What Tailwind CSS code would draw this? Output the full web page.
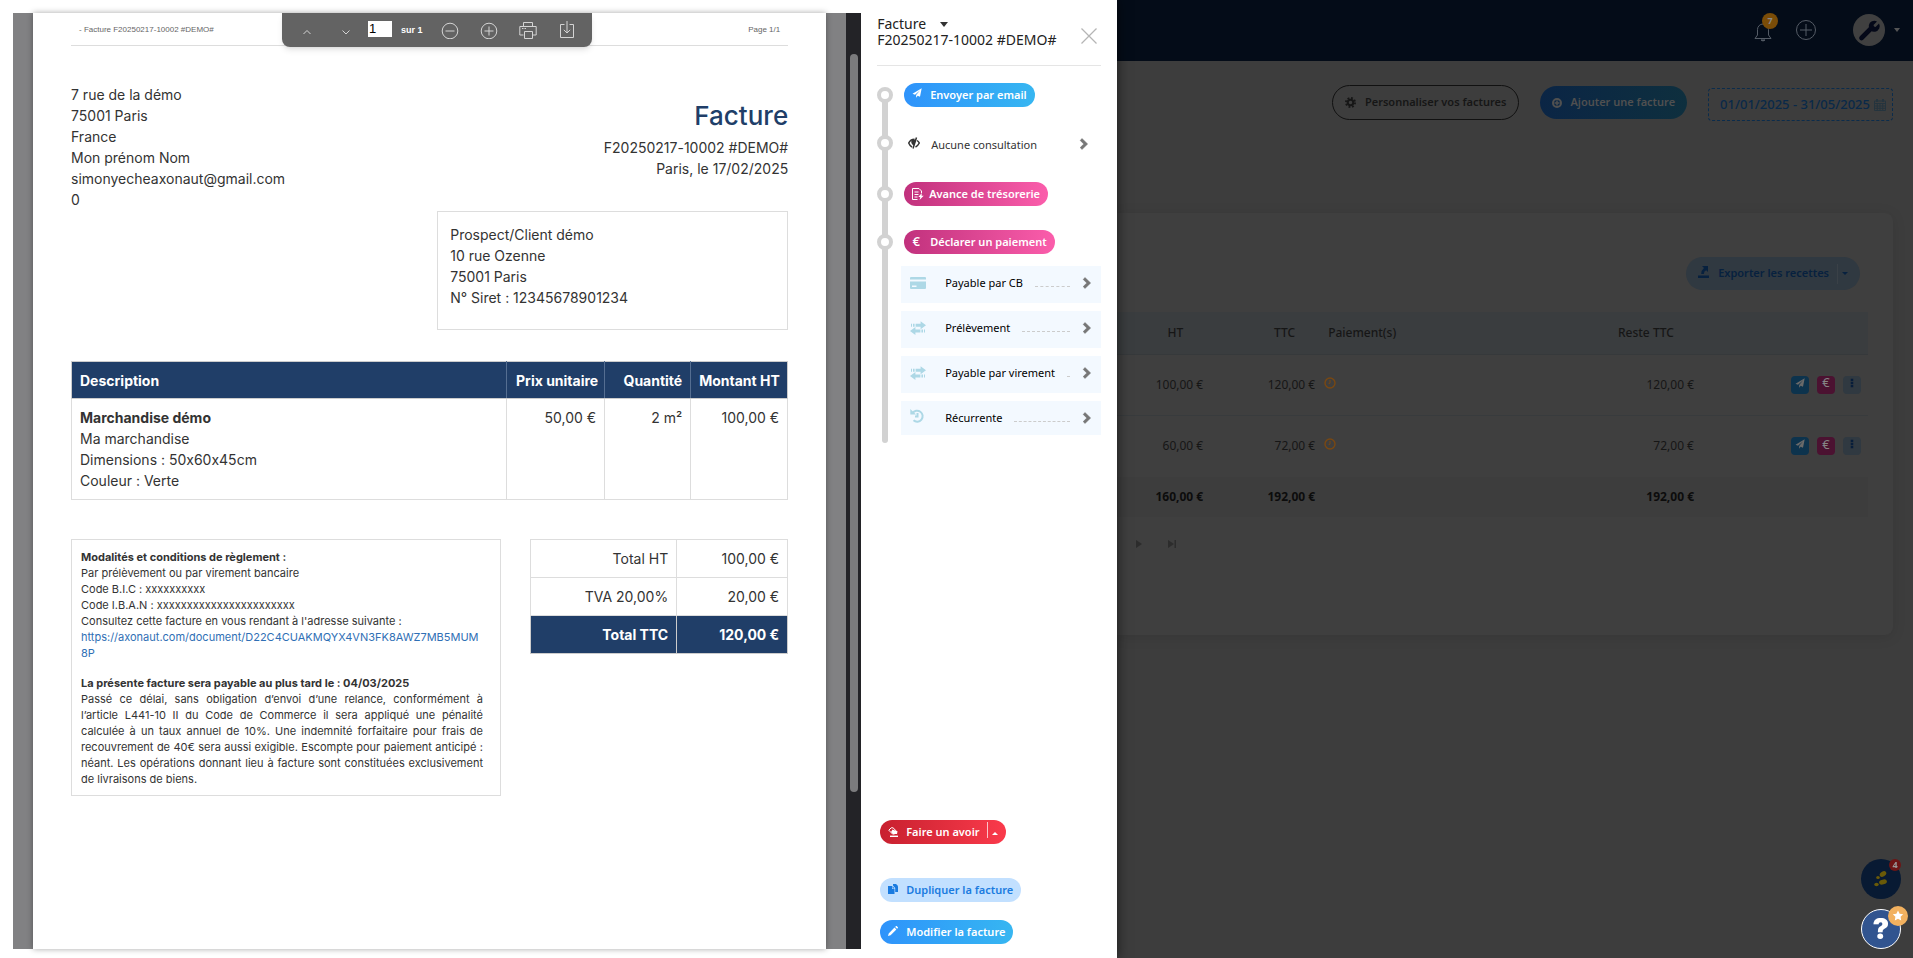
<!DOCTYPE html>
<html lang="fr">
  <head>
    <meta charset="UTF-8" />
    <meta name="viewport" content="width=device-width, initial-scale=1.0" />
    <title>Facture F20250217-10002 #DEMO#</title>
    <script src="https://cdn.jsdelivr.net/npm/@tailwindcss/browser@4"></script>
  </head>
  <body class="bg-[#3d3d3d] font-['Noto_Sans',sans-serif] text-xs">
    <!-- shared icons -->
    <svg class="hidden" aria-hidden="true">
      <symbol id="plane" viewBox="0 0 16 16">
        <path d="M15.5 0.5 0.8 9l4 1.6L13 3.6 6.6 11.3V15.5l2.4-3.1 3.8 1.6z" fill="currentColor" />
      </symbol>
      <symbol id="chevron" viewBox="0 0 10 12">
        <path d="M1.2 2.4 3 .6 8.6 6 3 11.4 1.2 9.6 4.8 6z" fill="currentColor" stroke="currentColor" stroke-width=".6" />
      </symbol>
      <symbol id="transfer" viewBox="0 0 16 14">
        <path d="M1 2.8h1v3H1zM3 2.8h1.600v3H3zM5.600 2.800h5V.200L16 4.300l-5.400 4V5.800h-5zM15 8.600h-1v3h1zM13 8.600h-1.600v3H13zM10.400 8.600h-5V6L0 10.100l5.400 3.900v-2.400h5z" fill="currentColor" />
      </symbol>
      <symbol id="clock" viewBox="0 0 12 12">
        <circle cx="6" cy="6" r="5" fill="none" stroke="currentColor" stroke-width="1.4" />
        <path d="M6 3v3.300H4.500" fill="none" stroke="currentColor" />
      </symbol>
      <symbol id="dots" viewBox="0 0 4 12">
        <path d="M.5 .8h3v2.800h-3zM.5 4.600h3v2.800h-3zM.5 8.400h3v2.800h-3z" fill="currentColor" />
      </symbol>
    </svg>

    <div class="flex h-screen overflow-hidden">
      <section class="z-10 flex w-[58.4%] shrink-0 bg-white shadow-[0_0_12px_rgba(0,0,0,0.6)]">
        <!-- pdf viewer -->
        <div class="mt-[13px] mb-[9px] ml-[13px] flex flex-1 bg-[#818183] font-['Inter',sans-serif] text-[#333] [font-feature-settings:'calt'_0]">
          <article class="relative mx-5 flex-1 bg-white px-[38px] shadow-[0_0_6px_rgba(0,0,0,0.35)]">
            <div class="absolute top-0 left-[249px] flex h-[34px] items-center rounded-b-lg bg-[#636363] pr-[6px] pl-[5px] text-[#d4d4d4] shadow-md">
              <button aria-label="Page précédente" class="flex w-[39px] justify-center">
                <svg class="mt-1 h-2 w-2" viewBox="0 0 8 8" fill="none" stroke="currentColor"><path d="M.5 6 4 2.500 7.500 6" /></svg>
              </button>
              <button aria-label="Page suivante" class="flex w-[39px] justify-center">
                <svg class="mt-1 h-2 w-2" viewBox="0 0 8 8" fill="none" stroke="currentColor"><path d="M.5 2.500 4 6l3.500-3.500" /></svg>
              </button>
              <input aria-label="Page" value="1" class="mr-[9px] mb-[3px] ml-[3px] h-4 w-6 bg-white px-px font-['Liberation_Sans',sans-serif] text-[13px] text-black outline-none" />
              <span class="w-[29px] font-['Liberation_Sans',sans-serif] text-[9px] font-bold text-white">sur 1</span>
              <button aria-label="Zoom arrière" class="flex w-[39px] justify-center">
                <svg class="h-[18px] w-[18px]" viewBox="0 0 18 18" fill="none" stroke="currentColor"><circle cx="9" cy="10" r="7.800" /><path d="M4.500 10h9" /></svg>
              </button>
              <button aria-label="Zoom avant" class="flex w-[39px] justify-center">
                <svg class="h-[18px] w-[18px]" viewBox="0 0 18 18" fill="none" stroke="currentColor"><circle cx="9" cy="10" r="7.800" /><path d="M4.500 10h9M9 5.500v9" /></svg>
              </button>
              <button aria-label="Imprimer" class="flex w-[39px] justify-center">
                <svg class="h-[18px] w-[18px]" viewBox="0 0 18 18" fill="none" stroke="currentColor"><path d="M4.500 5.500v-4h9v4M4.500 14H.800V5.500h16.400V14h-3.700M5.500 10.500h8v7h-8zM3 7.500h1.500M5.500 7.500H7" /></svg>
              </button>
              <button aria-label="Télécharger" class="flex w-[39px] justify-center">
                <svg class="h-[18px] w-4" viewBox="0 0 16 18" fill="none" stroke="currentColor"><path d="M5.500 3.500h-4v13h13v-13h-4M8 0v12M4.800 8.800 8 12l3.200-3.200" /></svg>
              </button>
            </div>

            <header class="flex h-[33px] items-center justify-between border-b border-[#ddd] px-2 pt-[3px] font-['Liberation_Sans',sans-serif] text-[8px] text-[#666]">
              <span>- Facture F20250217-10002 #DEMO#</span>
              <span>Page 1/1</span>
            </header>

            <div class="mt-[38px] flex justify-between text-[14px] leading-[21px]">
              <address class="not-italic">
                7 rue de la démo<br />75001 Paris<br />France<br />Mon prénom Nom<br />simonyecheaxonaut@gmail.com<br />0
              </address>
              <div class="pt-[13px] text-right">
                <h1 class="mb-[2px] text-[26px] leading-[38px] font-medium text-[#203e68]">Facture</h1>
                <p>F20250217-10002 #DEMO#</p>
                <p>Paris, le 17/02/2025</p>
              </div>
            </div>

            <div class="mt-px ml-auto h-[119px] w-[351px] border border-[#ddd] px-3 pt-3 text-[14px] leading-[21px]">
              Prospect/Client démo<br />10 rue Ozenne<br />75001 Paris<br />N° Siret : 12345678901234
            </div>

            <table class="mt-[31px] w-full table-fixed border-collapse text-[14px] leading-[21px]">
              <thead class="bg-[#203e68] text-white">
                <tr class="h-[37px]">
                  <th class="border border-[#ccc] border-r-[#556e91] px-2 text-left font-bold">Description</th>
                  <th class="w-[98px] border border-[#ccc] border-r-[#556e91] px-[6px] text-right font-bold whitespace-nowrap">Prix unitaire</th>
                  <th class="w-[86px] border border-[#ccc] border-r-[#556e91] px-2 text-right font-bold">Quantité</th>
                  <th class="w-[97px] border border-[#ccc] px-2 text-right font-bold whitespace-nowrap">Montant HT</th>
                </tr>
              </thead>
              <tbody>
                <tr class="h-[101px] align-top">
                  <td class="border border-[#ddd] px-2 pt-2">
                    <b>Marchandise démo</b><br />Ma marchandise<br />Dimensions : 50x60x45cm<br />Couleur : Verte
                  </td>
                  <td class="border border-[#ddd] px-2 pt-2 text-right">50,00 €</td>
                  <td class="border border-[#ddd] px-2 pt-2 text-right">2 m²</td>
                  <td class="border border-[#ddd] px-2 pt-2 text-right">100,00 €</td>
                </tr>
              </tbody>
            </table>

            <div class="mt-[39px] flex items-start justify-between">
              <div class="w-[430px] border border-[#ddd] px-[9px] pt-[9px] pb-[8px] text-[11px] leading-4">
                <p class="font-bold">Modalités et conditions de règlement :</p>
                <p>Par prélèvement ou par virement bancaire</p>
                <p>Code B.I.C : xxxxxxxxxx</p>
                <p>Code I.B.A.N : xxxxxxxxxxxxxxxxxxxxxxx</p>
                <p>Consultez cette facture en vous rendant à l'adresse suivante :</p>
                <a href="#" class="block pr-3 break-all text-[#2f6fb5]">https://axonaut.com/document/D22C4CUAKMQYX4VN3FK8AWZ7MB5MUM8P</a>
                <p class="mt-[14px] font-bold">La présente facture sera payable au plus tard le : 04/03/2025</p>
                <p class="pr-2 text-justify">
                  Passé ce délai, sans obligation d’envoi d’une relance, conformément à l’article L441-10 II du Code de Commerce il sera appliqué une pénalité calculée à un taux annuel de 10%. Une indemnité forfaitaire pour frais de recouvrement de 40€ sera aussi exigible. Escompte pour paiement anticipé : néant. Les opérations donnant lieu à facture sont constituées exclusivement de livraisons de biens.
                </p>
              </div>
              <table class="w-[258px] border-collapse text-right text-[14px] leading-[21px]">
                <tr class="h-[38px]">
                  <th class="border border-[#ddd] px-2 font-normal">Total HT</th>
                  <td class="w-[111px] border border-[#ddd] px-2">100,00 €</td>
                </tr>
                <tr class="h-[38px]">
                  <th class="border border-[#ddd] px-2 font-normal">TVA 20,00%</th>
                  <td class="border border-[#ddd] px-2">20,00 €</td>
                </tr>
                <tr class="h-[38px] bg-[#203e68] font-bold text-white">
                  <th class="border border-[#ccc] px-2">Total TTC</th>
                  <td class="border border-[#ccc] px-2">120,00 €</td>
                </tr>
              </table>
            </div>
          </article>
          <!-- scrollbar -->
          <div class="flex w-[15px] justify-center bg-[#232327] pt-[41px] pb-[157px]">
            <div class="w-2 rounded-full bg-[#7b7b7d]"></div>
          </div>
        </div>

        <!-- actions panel -->
        <aside class="flex w-64 flex-col px-4 pt-4 pb-[14px] text-[11px] text-[#333]">
          <div class="flex h-[50px] justify-between border-b border-[#e5e5e5]">
            <h2 class="text-[14px] leading-4 whitespace-nowrap text-[#222]">
              <button class="flex items-center gap-[14px]">Facture <span class="border-x-4 border-t-[5px] border-x-transparent border-t-[#333]"></span></button>
              F20250217-10002 #DEMO#
            </h2>
            <button aria-label="Fermer" class="mt-3 mr-1 h-4 w-4 text-[#b5b5b5]">
              <svg viewBox="0 0 16 16" fill="none" stroke="currentColor" stroke-width="1.300"><path d="M.5.5l15 15M15.500.500l-15 15" /></svg>
            </button>
          </div>

          <ol class="relative mt-[17px] h-[361px] pl-[27px]">
            <li class="absolute top-3 left-[5px] h-[348px] w-[6px] rounded-full bg-[#d2d2d2]"></li>
            <li class="relative flex h-6 items-center before:absolute before:-left-[27px] before:h-4 before:w-4 before:rounded-full before:border-4 before:border-[#d2d2d2] before:bg-white">
              <button class="flex h-6 items-center gap-2 rounded-full bg-linear-to-r from-[#2f93fb] to-[#37b6f1] px-2 font-semibold whitespace-nowrap text-white">
                <svg class="mb-1 h-[10px] w-[10px]"><use href="#plane" /></svg>Envoyer par email
              </button>
            </li>
            <li class="relative mt-6 flex h-6 items-center before:absolute before:-left-[27px] before:h-4 before:w-4 before:rounded-full before:border-4 before:border-[#d2d2d2] before:bg-white">
              <button class="mt-1 flex w-full items-center pr-3 pl-1">
                <svg class="mr-[11px] mb-1 h-3 w-3" viewBox="0 0 12 12" fill="none" stroke="currentColor" stroke-width="1.500"><path d="M4 10C2.500 9.200 1.300 7.500.700 6 1.800 3.600 3.800 2.200 6.500 2.200M9 3.500c1 .700 1.800 1.500 2.300 2.500C10.300 8 9 9.300 7.500 10M8.500.500 5 11.500" /><path d="M3.500 3 8 2.500 6.200 8.500C3.500 8 2.800 5 3.500 3z" fill="currentColor" stroke="none" /></svg>
                Aucune consultation
                <svg class="mb-[2px] ml-auto h-3 w-[10px] text-[#777]"><use href="#chevron" /></svg>
              </button>
            </li>
            <li class="relative mt-[27px] flex h-6 items-center before:absolute before:-left-[27px] before:h-4 before:w-4 before:rounded-full before:border-4 before:border-[#d2d2d2] before:bg-white">
              <button class="flex h-6 items-center gap-[5px] rounded-full bg-linear-to-r from-[#c1317d] to-[#fb5dab] px-2 font-semibold whitespace-nowrap text-white">
                <svg class="h-3 w-3" viewBox="0 0 12 12" fill="none" stroke="currentColor"><path d="M5.500 11.500h-5V.500H7l2.500 2.500v2M2.500 4h4M2.500 6.500h4M2.500 9h3" /><path d="M9.800 5 6.300 9h2L7.500 12 11.700 7.800H9.600z" fill="currentColor" stroke="none" /></svg>Avance de trésorerie
              </button>
            </li>
            <li class="relative mt-6 flex h-6 items-center before:absolute before:-left-[27px] before:h-4 before:w-4 before:rounded-full before:border-4 before:border-[#d2d2d2] before:bg-white">
              <button class="flex h-6 items-center gap-[10px] rounded-full bg-linear-to-r from-[#c1317d] to-[#fb5dab] px-2 font-semibold whitespace-nowrap text-white">
                <span class="mb-px w-2 text-[13px]">€</span>Déclarer un paiement
              </button>
            </li>
            <li class="-ml-[3px] mt-3 flex flex-col gap-2 whitespace-nowrap text-black">
              <button class="flex h-[37px] items-center bg-[#f3f9ff] pr-[9px] pl-[9px]">
                <svg class="mr-[19px] mb-1 h-3 w-4 text-[#add8e6]" viewBox="0 0 16 12" fill="currentColor"><path d="M1 0h14a1 1 0 0 1 1 1v1.500H0V1a1 1 0 0 1 1-1zM0 4.500h16V11a1 1 0 0 1-1 1H1a1 1 0 0 1-1-1zM2 8.500v1.500h4.500V8.500z" fill-rule="evenodd" /></svg>
                <span class="mb-[3px]">Payable par CB</span>
                <span class="mt-1 mr-3 ml-3 flex-1 border-b border-dashed border-[#ccc]"></span>
                <svg class="mb-1 h-3 w-[10px] text-[#777]"><use href="#chevron" /></svg>
              </button>
              <button class="flex h-[37px] items-center bg-[#f3f9ff] pr-[9px] pl-[9px]">
                <svg class="mr-[19px] mb-1 h-[14px] w-4 text-[#add8e6]"><use href="#transfer" /></svg>
                <span class="mb-[3px]">Prélèvement</span>
                <span class="mt-1 mr-3 ml-3 flex-1 border-b border-dashed border-[#ccc]"></span>
                <svg class="mb-1 h-3 w-[10px] text-[#777]"><use href="#chevron" /></svg>
              </button>
              <button class="flex h-[37px] items-center bg-[#f3f9ff] pr-[9px] pl-[9px]">
                <svg class="mr-[19px] mb-1 h-[14px] w-4 text-[#add8e6]"><use href="#transfer" /></svg>
                <span class="mb-[3px]">Payable par virement</span>
                <span class="mt-1 mr-3 ml-3 flex-1 border-b border-dashed border-[#ccc]"></span>
                <svg class="mb-1 h-3 w-[10px] text-[#777]"><use href="#chevron" /></svg>
              </button>
              <button class="flex h-[34px] items-center bg-[#f3f9ff] pr-[9px] pl-[9px]">
                <svg class="mr-[21px] mb-1 h-[14px] w-[14px] text-[#add8e6]" viewBox="0 0 14 14" fill="none" stroke="currentColor" stroke-width="2"><path d="M2.500 4.200A5.500 5.500 0 1 1 3.500 11.300M7.500 4v3.500H5" /><path d="M.300 0v5.500H6z" fill="currentColor" stroke="none" /></svg>
                <span>Récurrente</span>
                <span class="mt-[6px] mr-3 ml-3 flex-1 border-b border-dashed border-[#ccc]"></span>
                <svg class="h-3 w-[10px] text-[#777]"><use href="#chevron" /></svg>
              </button>
            </li>
          </ol>

          <div class="mt-auto flex flex-col items-start pl-[3px] font-semibold whitespace-nowrap">
            <div class="flex h-6 items-center rounded-full bg-linear-to-r from-[#c8202f] to-[#fa3a4b] pl-2 text-white">
              <button class="flex items-center gap-2">
                <svg class="h-[10px] w-[10px]" viewBox="0 0 10 10" fill="none" stroke="currentColor"><path d="M3.200.800.800 3.200 4.500 7h2L8.800 4.500 5 .800z" /><path d="M4.500 2.500 9.500 4.500 9 7H5L3 5z" fill="currentColor" stroke="none" /><path d="M2 9.300h8" stroke-width="1.400" /></svg>Faire un avoir
              </button>
              <button aria-label="Plus d'options" class="mb-1 ml-[7px] flex h-4 w-[19px] items-center border-l border-white/70 pl-1">
                <span class="mt-[6px] border-x-[3px] border-b-[3px] border-x-transparent border-b-white"></span>
              </button>
            </div>
            <button class="mt-[34px] flex h-6 items-center gap-2 rounded-full bg-[#c2e0ff] px-2 text-[#1a7be0]">
              <svg class="mb-[2px] h-[10px] w-[10px]" viewBox="0 0 10 10" fill="currentColor"><path d="M0 2h4v3h2.500v5H0zM4.500 2 6.500 4.500h-2zM5 0h3l2 2.500V8H7.200V4L5 1.500zM8.300.200 10 2H8.300z" /></svg>Dupliquer la facture
            </button>
            <button class="mt-[18px] flex h-6 items-center gap-2 rounded-full bg-linear-to-r from-[#2f93fb] to-[#37b6f1] px-2 text-white">
              <svg class="mb-[2px] h-[10px] w-[10px]" viewBox="0 0 10 10" fill="currentColor"><path d="M0 10 .700 7.400 6.500 1.600 8.400 3.500 2.600 9.300zM7.200.900 8 .100q.400-.2.700 0L9.900 1.300q.2.400 0 .700l-.800.800z" /></svg>Modifier la facture
            </button>
          </div>
        </aside>
      </section>

      <!-- dimmed application behind the drawer -->
      <main class="flex-1 text-[#161616]">
        <nav class="flex h-[61px] items-center justify-end bg-[#040c18] pr-[13px] pb-[2px]">
          <button aria-label="Notifications" class="relative mr-[24px] text-[#555c66]">
            <svg class="mt-1 h-5 w-[18px]" viewBox="0 0 18 20" fill="none" stroke="currentColor"><path d="M1 16.500 3.500 13V7.500a5.500 5.500 0 0 1 11 0V13l2.500 3.500z" /><path d="M7 18q2 2 4 0z" fill="currentColor" /></svg>
            <span class="absolute -top-[5px] left-2 flex h-4 w-4 items-center justify-center rounded-full bg-[#7a4c07] text-[9px] font-bold text-[#8a8a8a]">7</span>
          </button>
          <button aria-label="Ajouter" class="mr-[37px] text-[#555c66]">
            <svg class="h-5 w-5" viewBox="0 0 20 20" fill="none" stroke="currentColor"><circle cx="10" cy="10" r="9.500" /><path d="M10 4v12M4 10h12" /></svg>
          </button>
          <button aria-label="Compte" class="flex items-center gap-[9px]">
            <svg class="h-8 w-8" viewBox="0 0 32 32"><circle cx="16" cy="16" r="16" fill="#404040" /><path d="M8.500 24 18 14.500" stroke="#040818" stroke-width="4.600" stroke-linecap="round" /><path d="M24 7.500 20.500 11l.500 1.500 1.500.500 3.500-3.500a5.500 5.500 0 1 1-2-2z" fill="#040818" /></svg>
            <span class="border-x-[3px] border-t-4 border-x-transparent border-t-[#555]"></span>
          </button>
        </nav>

        <div class="mr-5 flex items-center justify-end gap-[21px] pt-[23px] text-[11px]">
          <button class="flex h-[35px] items-center gap-[9px] rounded-full border border-[#111] px-3 font-semibold">
            <svg class="h-[11px] w-[11px]" viewBox="0 0 12 12" fill="none" stroke="currentColor"><circle cx="6" cy="6" r="3" stroke-width="2.200" /><circle cx="6" cy="6" r="5" stroke-width="2" stroke-dasharray="2 1.930" /></svg>Personnaliser vos factures
          </button>
          <button class="flex h-[33px] items-center gap-2 rounded-full bg-linear-to-r from-[#0b2545] to-[#0e2f3e] px-3 font-semibold text-[#505050]">
            <svg class="h-[10px] w-[10px]" viewBox="0 0 10 10" fill="none" stroke="currentColor" stroke-width="2"><circle cx="5" cy="5" r="4" /><path d="M5 2.500v5M2.500 5h5" stroke-width="1.500" /></svg>Ajouter une facture
          </button>
          <button class="mt-[4px] flex h-[33px] items-center gap-1 rounded border border-dashed border-[#0b2c4c] px-[6px] pl-[11px] text-[13px] font-medium text-[#092949]">
            01/01/2025 - 31/05/2025
            <svg class="h-3 w-3" viewBox="0 0 12 12" fill="none" stroke="#25343e"><path d="M.500 2h11v9.500H.500zM.500 4.500h11M.500 7h11M.500 9.300h11M3.300 4.500v7M6 4.500v7M8.700 4.500v7" /><path d="M3 0v3M9 0v3" stroke-width="2" /></svg>
          </button>
        </div>

        <div class="mt-[92px] mr-5 h-[422px] rounded-r-lg bg-[#3f3f3f] pr-[25px] shadow-[0_2px_14px_rgba(0,0,0,0.1)]">
          <div class="flex justify-end pt-[44px] pr-2">
            <div class="flex h-[33px] items-center rounded-full bg-[#303941] pl-3 text-[11px] font-semibold text-[#07213f]">
              <button class="flex items-center gap-[9px]">
                <svg class="mb-1 h-3 w-[11px]" viewBox="0 0 11 12" fill="currentColor"><path d="M0 9.500h11V12H0zM4 0h6v6L8.200 4.200Q6 5 5.800 8H3.200Q3 4.500 6 2z" /></svg>Exporter les recettes
              </button>
              <button aria-label="Plus d'exports" class="ml-2 flex h-5 w-[23px] items-center border-l border-[#3a4147] pl-1">
                <span class="border-x-[3px] border-t-[3px] border-x-transparent border-t-[#07213f]"></span>
              </button>
            </div>
          </div>

          <table class="mt-[22px] w-full table-fixed">
            <thead>
              <tr class="h-[42px] border-b border-[#36393b] bg-[#3a3d3f]">
                <th class="w-[94px] pr-7 text-right font-medium">HT</th>
                <th class="w-[113px] pr-[29px] text-right font-medium">TTC</th>
                <th class="pl-1 text-left font-medium">Paiement(s)</th>
                <th class="w-[110px] pr-7 text-right font-medium">Reste TTC</th>
                <th class="w-[166px]"></th>
              </tr>
            </thead>
            <tbody class="text-right">
              <tr class="h-[61px] border-b border-[#383b3d]">
                <td class="pr-2">100,00 €</td>
                <td class="pr-[9px]">120,00 €</td>
                <td><svg class="mb-1 h-3 w-3 text-[#7a4812]"><use href="#clock" /></svg></td>
                <td class="pr-2">120,00 €</td>
                <td>
                  <div class="flex justify-end gap-2 pr-[7px]">
                    <button aria-label="Envoyer" class="flex h-[18px] w-[18px] items-center justify-center rounded-sm bg-[#0d334d] text-[#6a6a6a]"><svg class="mb-1 h-[10px] w-[10px]"><use href="#plane" /></svg></button>
                    <button aria-label="Paiement" class="flex h-[18px] w-[18px] items-center justify-center rounded-sm bg-[#4b1231] pb-1 text-[13px] text-[#858585]">€</button>
                    <button aria-label="Options" class="flex h-[18px] w-[18px] items-center justify-center rounded-sm bg-[#303941] text-[#071d3a]"><svg class="mb-1 h-[10px] w-[4px]"><use href="#dots" /></svg></button>
                  </div>
                </td>
              </tr>
              <tr class="h-[62px]">
                <td class="pr-2">60,00 €</td>
                <td class="pr-[9px]">72,00 €</td>
                <td><svg class="mb-1 h-3 w-3 text-[#7a4812]"><use href="#clock" /></svg></td>
                <td class="pr-2">72,00 €</td>
                <td>
                  <div class="flex justify-end gap-2 pr-[7px]">
                    <button aria-label="Envoyer" class="flex h-[18px] w-[18px] items-center justify-center rounded-sm bg-[#0d334d] text-[#6a6a6a]"><svg class="mb-1 h-[10px] w-[10px]"><use href="#plane" /></svg></button>
                    <button aria-label="Paiement" class="flex h-[18px] w-[18px] items-center justify-center rounded-sm bg-[#4b1231] pb-1 text-[13px] text-[#858585]">€</button>
                    <button aria-label="Options" class="flex h-[18px] w-[18px] items-center justify-center rounded-sm bg-[#303941] text-[#071d3a]"><svg class="mb-1 h-[10px] w-[4px]"><use href="#dots" /></svg></button>
                  </div>
                </td>
              </tr>
            </tbody>
            <tfoot>
              <tr class="h-10 bg-[#3d3d3d] text-right font-bold text-[#0c0c0c]">
                <td class="pr-2">160,00 €</td>
                <td class="pr-[9px]">192,00 €</td>
                <td></td>
                <td class="pr-2">192,00 €</td>
                <td></td>
              </tr>
            </tfoot>
          </table>

          <div class="mt-[23px] flex items-center gap-[26px] pl-[19px] text-[#2c2c2c]">
            <button aria-label="Suivant" class="h-2 w-[6px]"><svg class="h-2 w-[6px]" viewBox="0 0 6 8" fill="currentColor"><path d="M0 0 6 4 0 8z" /></svg></button>
            <button aria-label="Dernier" class="h-2 w-2"><svg class="h-2 w-2" viewBox="0 0 8 8" fill="currentColor"><path d="M0 0 6 4 0 8zM6.500 0H8v8H6.500z" /></svg></button>
          </div>
        </div>
      </main>
    </div>

    <!-- floating helpers -->
    <div class="fixed right-3 bottom-[9px] z-20 flex flex-col gap-[10px]">
      <button aria-label="Premiers pas" class="relative flex h-10 w-10 items-center justify-center rounded-full bg-[#081a33]">
        <svg class="h-5 w-4" viewBox="0 0 16 20" fill="#6a5a08"><ellipse cx="10" cy="5" rx="3.600" ry="2.400" transform="rotate(-35 10 5)" /><ellipse cx="5" cy="8.500" rx="1.800" ry="1.500" /><ellipse cx="10" cy="13" rx="4" ry="2.400" transform="rotate(-15 10 13)" /><ellipse cx="3.500" cy="15.500" rx="2.200" ry="1.700" /></svg>
        <span class="absolute top-0 right-0 flex h-3 w-3 items-center justify-center rounded-full bg-[#6d1515] text-[9px] font-bold text-[#999]">4</span>
      </button>
      <button aria-label="Aide" class="relative flex h-10 w-10 items-center justify-center rounded-full border border-white bg-[#31548f] font-['Inter',sans-serif] text-[28px] leading-none font-black text-white">
        ?
        <svg class="absolute -top-[4px] -right-[8px] h-5 w-5" viewBox="0 0 20 20"><circle cx="10" cy="10" r="10" fill="#f2b15f" /><path d="M10 4.500 11.600 7.800 15.200 8.300 12.600 10.800 13.200 14.500 10 12.700 6.800 14.500 7.400 10.800 4.800 8.300 8.400 7.800z" fill="#fff" /></svg>
      </button>
    </div>
  </body>
</html>
